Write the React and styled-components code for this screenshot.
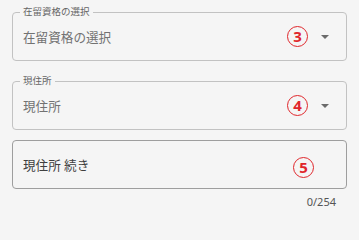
import styled, { createGlobalStyle } from "styled-components";

const GlobalStyle = createGlobalStyle`
  body {
    margin: 0;
    background: #f5f5f5;
    font-family: "Noto Sans", "Noto Sans CJK JP", sans-serif;
  }
`;

const fields = [
  { label: "在留資格の選択", value: "在留資格の選択", mark: "3", select: true },
  { label: "現住所", value: "現住所", mark: "4", select: true },
  { value: "現住所 続き", mark: "5", dark: true, counter: "0/254" },
];

export default function App() {
  return (
    <Page>
      <GlobalStyle />
      {fields.map((f, i) => (
        <FieldWrap key={i} $gap={i === 0 ? 12 : f.label ? 20 : 10}>
          <Field $dark={f.dark}>
            {f.label && <Label>{f.label}</Label>}
            <Value $dark={f.dark}>{f.value}</Value>
            <Mark $select={f.select}>{f.mark}</Mark>
            {f.select && (
              <Arrow viewBox="0 0 8 4">
                <path d="M0 0h8L4 4z" fill="#6b6b6b" />
              </Arrow>
            )}
          </Field>
          {f.counter && <Counter>{f.counter}</Counter>}
        </FieldWrap>
      ))}
    </Page>
  );
}

const Page = styled.div`
  display: flex;
  flex-direction: column;
  padding: 0 12px;
`;

const FieldWrap = styled.div`
  display: flex;
  flex-direction: column;
  margin-top: ${(p) => p.$gap}px;
`;

const Field = styled.div`
  position: relative;
  display: flex;
  align-items: center;
  height: 49px;
  box-sizing: border-box;
  border: 1px solid ${(p) => (p.$dark ? "#9e9e9e" : "#c2c2c2")};
  border-radius: 4px;
  padding: 0 17px 0 10px;
`;

const Label = styled.span`
  position: absolute;
  top: -7px;
  left: 7px;
  padding: 0 3px;
  background: #f5f5f5;
  font-size: 9.5px;
  line-height: 12px;
  color: #666;
`;

const Value = styled.span`
  flex: 1;
  font-size: 12.6px;
  color: ${(p) => (p.$dark ? "#3f3f3f" : "#727272")};
`;

const Mark = styled.span`
  display: flex;
  align-items: center;
  justify-content: center;
  box-sizing: border-box;
  width: 21px;
  height: 21px;
  border: 1.7px solid #e0262b;
  border-radius: 50%;
  color: #e0262b;
  font-family: "Open Sans", "Noto Sans", sans-serif;
  font-weight: 700;
  font-size: 15px;
  line-height: 1;
  margin-right: ${(p) => (p.$select ? "13px" : "15px")};
  margin-top: ${(p) => (p.$select ? "0" : "6px")};
`;

const Arrow = styled.svg`
  width: 8px;
  height: 4px;
`;

const Counter = styled.span`
  align-self: flex-end;
  margin-top: 5px;
  margin-right: 11px;
  font-size: 11px;
  color: #555;
`;
